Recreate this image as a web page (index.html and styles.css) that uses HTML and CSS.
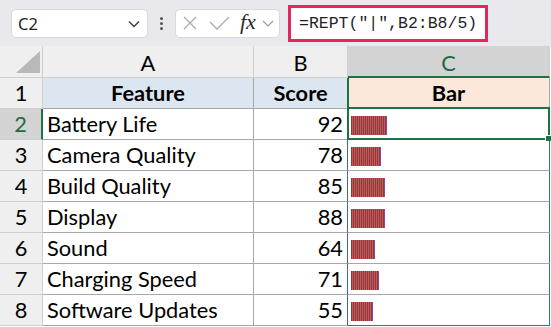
FILE: index.html
```html
<!DOCTYPE html>
<html>
<head>
<meta charset="utf-8">
<link rel="stylesheet" href="styles.css">
</head>
<body>
<div class="toolbar">
  <div class="namebox">
    <span>C2</span>
    <svg class="chev" width="12" height="8" viewBox="0 0 12 8"><polyline points="1,1.5 6,6.5 11,1.5" fill="none" stroke="#3a3a3a" stroke-width="1.4"/></svg>
  </div>
  <div class="dots"><i></i><i></i><i></i></div>
  <div class="fxbox">
    <svg width="14" height="14" viewBox="0 0 14 14"><path d="M1 1L13 13M13 1L1 13" stroke="#ababab" stroke-width="1.3" fill="none"/></svg>
    <svg class="check" width="21" height="14" viewBox="0 0 21 14"><polyline points="1,6 8,13 20,1" fill="none" stroke="#ababab" stroke-width="1.3"/></svg>
    <span class="fx">fx</span>
    <svg class="chev2" width="12" height="7" viewBox="0 0 12 7"><polyline points="1,1 6,6 11,1" fill="none" stroke="#9a9a9a" stroke-width="1.2"/></svg>
  </div>
  <div class="formula">=REPT("|",B2:B8/5)</div>
</div>
<div class="sheet">
  <div class="corner"><svg width="42" height="31" viewBox="0 0 42 31"><polygon points="16,27 40,5 40,27" fill="#b9b9b9"/></svg></div>
  <div class="colh">A</div>
  <div class="colh">B</div>
  <div class="colh colsel">C</div>

  <div class="rowh">1</div>
  <div class="c hdr blue">Feature</div>
  <div class="c hdr blue greenr">Score</div>
  <div class="c hdr peach greenl">Bar</div>

  <div class="rowh rowsel">2</div>
  <div class="c">Battery Life</div>
  <div class="c num">92</div>
  <div class="c bc active"><span class="bar" style="width:36px"></span><span class="selbox"><span class="handle"></span></span></div>

  <div class="rowh">3</div>
  <div class="c">Camera Quality</div>
  <div class="c num bluer">78</div>
  <div class="c bc bluer"><span class="bar" style="width:30px"></span></div>

  <div class="rowh">4</div>
  <div class="c">Build Quality</div>
  <div class="c num bluer">85</div>
  <div class="c bc bluer"><span class="bar" style="width:34px"></span></div>

  <div class="rowh">5</div>
  <div class="c">Display</div>
  <div class="c num bluer">88</div>
  <div class="c bc bluer"><span class="bar" style="width:34px"></span></div>

  <div class="rowh">6</div>
  <div class="c">Sound</div>
  <div class="c num bluer">64</div>
  <div class="c bc bluer"><span class="bar" style="width:24px"></span></div>

  <div class="rowh">7</div>
  <div class="c">Charging Speed</div>
  <div class="c num bluer">71</div>
  <div class="c bc bluer"><span class="bar" style="width:28px"></span></div>

  <div class="rowh">8</div>
  <div class="c">Software Updates</div>
  <div class="c num bluer">55</div>
  <div class="c bc bluer blueb"><span class="bar" style="width:22px"></span></div>
</div>
</body>
</html>
```
FILE: styles.css
```css
html, body {
  margin: 0;
  padding: 0;
}
body {
  width: 551px;
  height: 327px;
  overflow: hidden;
  background: #ffffff;
  font-family: Lato, "Liberation Sans", sans-serif;
}
.toolbar {
  height: 46px;
  box-sizing: border-box;
  display: flex;
  align-items: center;
  padding-left: 11px;
  background: #e9e9ed;
}
.namebox {
  width: 137px;
  height: 29px;
  box-sizing: border-box;
  background: #fff;
  border: 1px solid #d9d9dc;
  border-radius: 5px;
  display: flex;
  align-items: center;
  justify-content: space-between;
  padding: 0 7px 0 6px;
  font-family: "Noto Sans", sans-serif;
  font-size: 16.5px;
  color: #1f1f1f;
}
.chev { margin-top: 1px; }
.dots {
  margin-left: 12px;
  display: flex;
  flex-direction: column;
  gap: 2px;
}
.dots i {
  display: block;
  width: 3px;
  height: 3px;
  border-radius: 50%;
  background: #555;
}
.fxbox {
  margin-left: 12px;
  width: 105px;
  height: 29px;
  box-sizing: border-box;
  background: #fff;
  border: 1px solid #d9d9dc;
  border-radius: 5px;
  display: flex;
  align-items: center;
  padding-left: 7px;
}
.check { margin-left: 12px; }
.fx {
  margin-left: 10px;
  font-family: "Liberation Serif", serif;
  font-style: italic;
  font-size: 22px;
  line-height: 1;
  color: #2b2b2b;
  margin-top: -2px;
}
.chev2 { margin-left: 6px; margin-top: 1px; }
.formula {
  margin-left: 8px;
  width: 200px;
  height: 37px;
  box-sizing: border-box;
  border: 3px solid #e0285a;
  background: #fff;
  display: flex;
  align-items: center;
  padding-left: 8px;
  font-family: "Liberation Mono", monospace;
  font-size: 16.5px;
  color: #1f1f1f;
}
.sheet {
  display: grid;
  grid-template-columns: 43px 211px 94px 202px;
  grid-template-rows: 32px repeat(8, 31px);
}
.sheet > div {
  box-sizing: border-box;
  border-right: 1px solid #a8a8a8;
  border-bottom: 1px solid #a8a8a8;
  font-size: 21.8px;
  line-height: 30px;
  color: #000;
  white-space: nowrap;
  position: relative;
}
.corner, .colh, .rowh {
  background: #efefef;
}
.sheet > .corner { border-color: #cfcfcf; }
.sheet > .colh {
  border-color: #cfcfcf;
  text-align: center;
  line-height: 31px;
  padding-top: 1px;
}
.corner svg { display: block; }
.sheet > .colsel {
  background: #d3d3d3;
  color: #1e6b3f;
  border-bottom: 2px solid #1f7145;
}
.sheet > .rowh {
  border-color: #cfcfcf;
  text-align: center;
}
.sheet > .rowsel {
  background: #d3d3d3;
  color: #1e6b3f;
  border-right: 2px solid #1f7145;
}
.c { padding: 0 4px; }
.hdr { font-weight: bold; text-align: center; }
.blue { background: #dce6f1; }
.peach { background: #fbe8da; }
.sheet > .greenr { border-right-color: #1f7145; }
.greenl { box-shadow: inset 1px 0 0 #1f7145; }
.num { text-align: right; }
.sheet > .bluer { border-right-color: #3e66b8; }
.sheet > .blueb { border-bottom-color: #3e66b8; }
.bc {
  display: flex;
  align-items: flex-start;
  padding: 7px 0 0 3px;
}
.bar {
  display: block;
  height: 19px;
  background: repeating-linear-gradient(90deg, #9c3434 0 1px, #b46060 1px 2px);
  box-shadow: inset -1px 0 0 #8c4a9e;
}
.selbox {
  position: absolute;
  top: -2px;
  left: -1px;
  right: -1px;
  bottom: -1px;
  border: 2px solid #1f7145;
}
.handle {
  position: absolute;
  right: -4px;
  bottom: -4px;
  width: 5px;
  height: 5px;
  background: #1f7145;
  border: 1px solid #fff;
}
```
